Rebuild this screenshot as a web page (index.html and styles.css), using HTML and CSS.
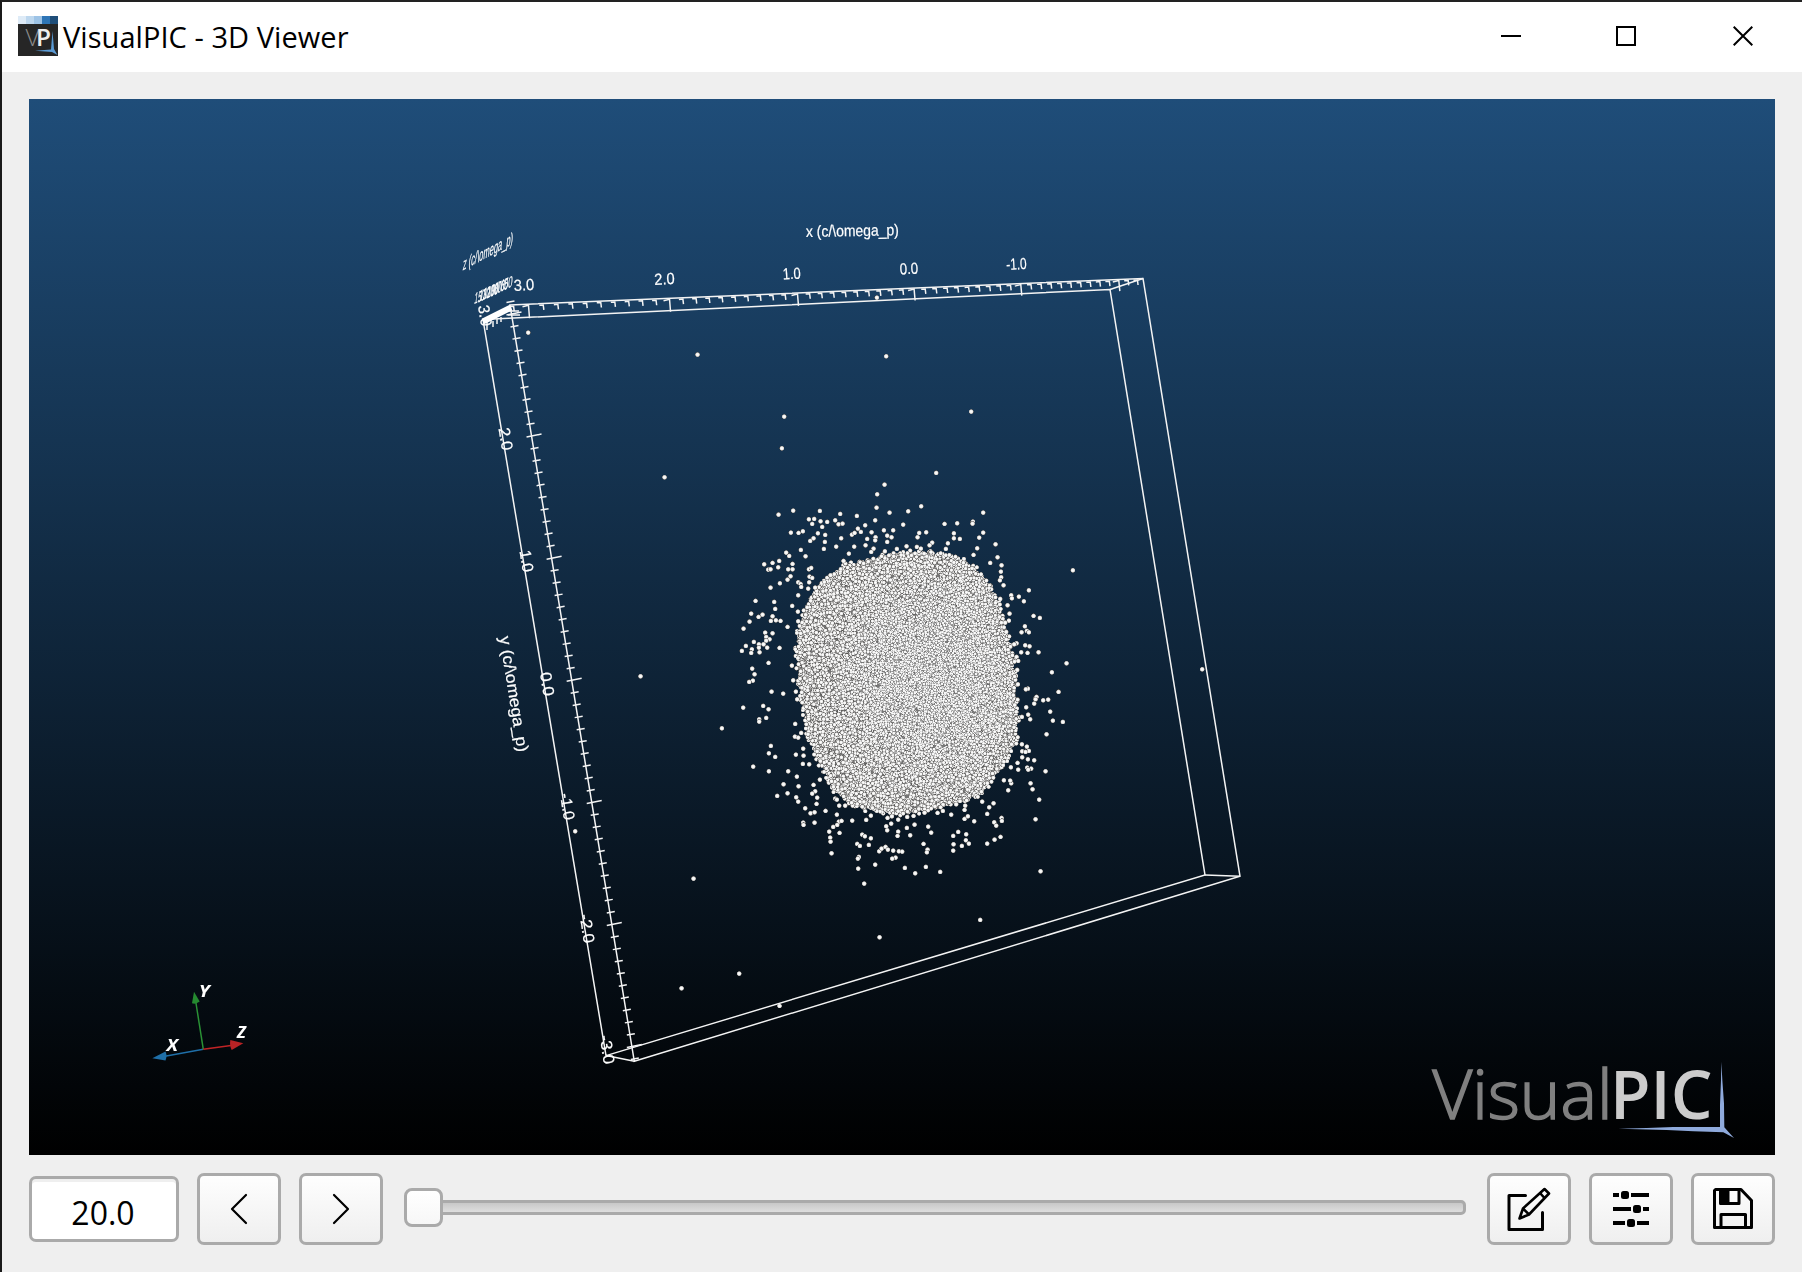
FILE: index.html
```html
<!DOCTYPE html>
<html lang="en">
<head>
<meta charset="utf-8">
<title>VisualPIC - 3D Viewer</title>
<link rel="stylesheet" href="styles.css">
</head>
<body>
<div class="window">
  <header class="titlebar">
    <svg class="app-icon" viewBox="0 0 40 40">
      <rect width="40" height="40" fill="#262626"/>
      <rect width="8" height="8" fill="#deebf7"/><rect x="8" width="8" height="8" fill="#bdd7ee"/>
      <rect x="16" width="8" height="8" fill="#9dc3e6"/><rect x="24" width="8" height="8" fill="#2e75b6"/>
      <rect x="32" width="8" height="8" fill="#1f4e79"/>
      <text x="7.500" y="30" class="icon-v" textLength="14" lengthAdjust="spacingAndGlyphs">V</text>
      <text x="18" y="30" class="icon-p" textLength="15" lengthAdjust="spacingAndGlyphs">P</text>
      <path d="M34.500 15 L36 33 L39.500 39 L34 36 L17 34.700 L33 33.500Z" fill="#5b9bd5"/>
    </svg>
    <h1 class="title">VisualPIC - 3D Viewer</h1>
    <div class="controls">
      <svg viewBox="0 0 20 20"><path d="M0 10H20" /></svg>
      <svg viewBox="0 0 20 20"><rect x="1" y="1" width="18" height="18"/></svg>
      <svg viewBox="0 0 20 20"><path d="M.7 .7 19.300 19.300M19.300 .7 .7 19.300"/></svg>
    </div>
  </header>
  <main class="content">
    <section class="viewport">
      <canvas id="cloud" class="layer" width="1746" height="1056"></canvas>
      <svg class="layer" viewBox="29 99 1746 1056">
        <g class="wire">
          <path d="M510 305 1143 278.500 1240 876.300 634.300 1061.300Z"/>
          <path d="M483 319.500 1110 289.500 1205 875 606 1055.600Z"/>
          <path d="M1110 289.500 1143 278.500M1205 875 1240 876.300M606 1055.600 634.300 1061.300"/>
          <path id="ticks"/>
          <path d="M493 321v6M497 319v5M501 317v5M505 311h14M508 315h12M487 322v8"/>
        </g>
        <path d="M483 321.500 511 307.500" stroke="#fff" stroke-width="6"/>
        <g class="axis-text">
          <text transform="translate(806 237) rotate(-1)" textLength="93" lengthAdjust="spacingAndGlyphs">x (c/\omega_p)</text>
          <text transform="translate(514 291) rotate(-3)" textLength="20.500" lengthAdjust="spacingAndGlyphs">3.0</text>
          <text transform="translate(654.500 285) rotate(-3)" textLength="20.500" lengthAdjust="spacingAndGlyphs">2.0</text>
          <text transform="translate(783 279.500) rotate(-3)" textLength="18" lengthAdjust="spacingAndGlyphs">1.0</text>
          <text transform="translate(900 274.500) rotate(-3)" textLength="18.500" lengthAdjust="spacingAndGlyphs">0.0</text>
          <text transform="translate(1006.500 270) rotate(-3)" textLength="20.500" lengthAdjust="spacingAndGlyphs">-1.0</text>

          <text transform="translate(478 306) rotate(81)" textLength="21" lengthAdjust="spacingAndGlyphs">3.0</text>
          <text transform="translate(498.500 428.500) rotate(81)" textLength="23" lengthAdjust="spacingAndGlyphs">2.0</text>
          <text transform="translate(519.500 551) rotate(81)" textLength="22" lengthAdjust="spacingAndGlyphs">1.0</text>
          <text transform="translate(540 673) rotate(81)" textLength="24" lengthAdjust="spacingAndGlyphs">0.0</text>
          <text transform="translate(560 794) rotate(81)" textLength="27" lengthAdjust="spacingAndGlyphs">-1.0</text>
          <text transform="translate(579.500 915) rotate(81)" textLength="29" lengthAdjust="spacingAndGlyphs">-2.0</text>
          <text transform="translate(599.500 1036) rotate(81)" textLength="29" lengthAdjust="spacingAndGlyphs">-3.0</text>
          <text transform="translate(499.500 637) rotate(81)" textLength="117" lengthAdjust="spacingAndGlyphs">y (c/\omega_p)</text>

          <text transform="matrix(.47 -.25 -.1 1.080 462.500 270.500)">z (c/\omega_p)</text>
          <g class="z-numbers">
            <text transform="matrix(.38 -.15 -.12 1 474 304)">150</text>
            <text transform="matrix(.38 -.15 -.12 1 479 301.500)">130</text>
            <text transform="matrix(.38 -.15 -.12 1 483 299.500)">120</text>
            <text transform="matrix(.38 -.15 -.12 1 487 298)">100</text>
            <text transform="matrix(.38 -.15 -.12 1 491 296)">90</text>
            <text transform="matrix(.38 -.15 -.12 1 494 294.500)">80</text>
            <text transform="matrix(.38 -.15 -.12 1 497 293)">70</text>
            <text transform="matrix(.38 -.15 -.12 1 500.500 291.500)">60</text>
            <text transform="matrix(.48 -.19 -.1 1 503.500 290)">50</text>
          </g>
        </g>
        <g class="triad">
          <path d="M203.300 1049.300 165 1056.300" stroke="#1f6fa8"/>
          <path d="M152.300 1058.300 165.500 1051.500Q167.500 1056 165.500 1060.500Z" fill="#1f6fa8"/>
          <path d="M203.300 1049.300 195.800 1002" stroke="#2a9235"/>
          <path d="M194 991.700 199.700 1001.500Q196 1004.500 192 1003.300Z" fill="#258a30"/>
          <path d="M203.300 1049.300 231 1045.500" stroke="#c02426"/>
          <path d="M243.300 1043.300 230.300 1040Q229.500 1046 231.700 1050Z" fill="#b82325"/>
          <text x="166.500" y="1050.500" textLength="11.500" lengthAdjust="spacingAndGlyphs">X</text>
          <text x="198.800" y="997" textLength="11" lengthAdjust="spacingAndGlyphs">Y</text>
          <text x="237" y="1038.300">Z</text>
        </g>
        <g class="watermark">
          <text class="wm-light" x="1432.500" y="1118.600" textLength="180" lengthAdjust="spacingAndGlyphs">Visual</text>
          <text class="wm-bold" x="1610" y="1118.600" textLength="102.500" lengthAdjust="spacingAndGlyphs">PIC</text>
          <path transform="translate(1400 1040) scale(.33333)" fill="#8faadc" d="M964 65 967 120 972 190 973 262 985 275 1002 294 970 277 880 274 800 270 655 266 740 264 820 261 960 261 960 195 963 120Z"/>
        </g>
      </svg>
    </section>
    <footer class="toolbar">
      <div class="time-box">20.0</div>
      <button class="btn"><svg viewBox="0 0 84 72"><path d="M49 22 35 36 49 50" fill="none" stroke="#000" stroke-width="2.200" stroke-linecap="round" stroke-linejoin="round"/></svg></button>
      <button class="btn"><svg viewBox="0 0 84 72"><path d="M35 22 49 36 35 50" fill="none" stroke="#000" stroke-width="2.200" stroke-linecap="round" stroke-linejoin="round"/></svg></button>
      <div class="slider"><div class="groove"></div><div class="handle"></div></div>
      <button class="btn"><svg viewBox="0 0 84 72">
        <g fill="none" stroke="#000" stroke-width="3" stroke-linejoin="round" stroke-linecap="round">
          <path d="M38.500 22.500H22V56.500H55.500V39.500"/>
          <path stroke-width="2.600" d="M32.500 45.500 36 35.500 57.500 16 62 20.500 42 41.500ZM36 35.500 42 41.500M53 20 57.500 25"/>
        </g></svg></button>
      <button class="btn"><svg viewBox="0 0 84 72">
        <path d="M24 22h6M42 22h18M24 36h18M54 36h6M24 50h12M48 50h12" stroke="#000" stroke-width="4"/>
        <rect x="32" y="18" width="8" height="8" rx="2.500"/><rect x="44" y="32" width="8" height="8" rx="2.500"/><rect x="38" y="46" width="8" height="8" rx="2.500"/>
      </svg></button>
      <button class="btn"><svg viewBox="0 0 84 72">
        <g fill="none" stroke="#000" stroke-width="3" stroke-linejoin="round">
          <path d="M24.500 16.500H50L60.500 27.500V54.500H23.500V17.500Z"/>
          <path d="M29.500 17V30.500H48V17M30 54V41.500H54.500V54"/>
        </g>
        <path d="M29 17h9.500v13H29z"/>
      </svg></button>
    </footer>
  </main>
</div>
<script src="scene.js"></script>
</body>
</html>
```
FILE: styles.css
```css
* { box-sizing: border-box; }

body {
  margin: 0;
  width: 1802px;
  height: 1272px;
  overflow: hidden;
  background: #efefef;
  font-family: "Open Sans", "Noto Sans", sans-serif;
}

.window {
  display: flex;
  flex-direction: column;
  height: 100%;
  border-top: 2px solid #222;
  border-left: 2px solid #1a1a1a;
}

.titlebar {
  display: flex;
  align-items: center;
  height: 70px;
  padding: 0 49px 0 16px;
  background: #fff;
}

.app-icon { width: 40px; height: 40px; margin-top: -2px; }
.icon-v { font-size: 24px; font-weight: 300; fill: #8a8a8a; }
.icon-p { font-size: 24px; font-weight: 600; fill: #eee; }

.title {
  margin: -1px 0 0 5px;
  font-size: 29px;
  font-weight: 400;
  letter-spacing: .05px;
  white-space: nowrap;
}

.controls {
  display: flex;
  gap: 96px;
  margin: -2px 0 0 auto;
}

.controls svg {
  width: 20px;
  height: 20px;
  fill: none;
  stroke: #000;
  stroke-width: 2;
}

.controls svg:nth-child(2) { margin: 0 1px 0 -1px; }

.content {
  display: flex;
  flex-direction: column;
  flex: 1;
  padding: 27px;
  gap: 18px;
}

.viewport {
  position: relative;
  height: 1056px;
  background: linear-gradient(#1f4d79, #000);
}

.layer {
  position: absolute;
  inset: 0;
  width: 1746px;
  height: 1056px;
}

.wire path { fill: none; stroke: #f4f4f4; stroke-width: 1.5; }

.axis-text {
  font-family: "Liberation Sans", Arial, sans-serif;
  font-size: 16px;
  fill: #fff;
  stroke: #fff;
  stroke-width: .2px;
}

.triad path { stroke-width: 1.5; }

.triad text {
  font: italic 700 16.500px "Noto Sans", sans-serif;
  fill: #fff;
}

.watermark text { font-size: 67.500px; }
.wm-light { font-weight: 300; fill: #808080; stroke: #808080; stroke-width: 1.6px; }
.wm-bold { font-weight: 600; fill: #ccc; }

.toolbar {
  display: flex;
  align-items: center;
  gap: 18px;
  height: 72px;
}

.time-box {
  width: 150px;
  height: 66px;
  padding-right: 2px;
  border: 3px solid #aaa;
  border-radius: 7px;
  background: #fff;
  box-shadow: inset 0 3px #efefef;
  font-size: 32px;
  line-height: 67px;
  text-align: center;
}

.btn {
  width: 84px;
  height: 72px;
  padding: 0;
  border: 3px solid #aaa;
  border-radius: 7px;
  background: linear-gradient(#fefefe, #efefef);
}

.btn svg { display: block; width: 84px; height: 72px; margin: -3px; }

.slider {
  position: relative;
  display: flex;
  align-items: center;
  flex: 1;
  height: 39px;
  margin-bottom: 3px;
  padding: 0 3px;
}

.groove {
  flex: 1;
  height: 15px;
  border: 3px solid #aaa;
  border-radius: 5px;
  background: linear-gradient(#c8c8c8, #dedede);
}

.handle {
  position: absolute;
  left: 3px;
  width: 39px;
  height: 39px;
  border: 3px solid #aaa;
  border-radius: 8px;
  background: linear-gradient(#fff, #f7f7f7);
}
```
FILE: scene.js
```js
// Axis ticks, in window coordinates.
const ticks = [];
for (let i = -1; i <= 52; i++) {
  const t = i / 10;
  const x = (528.5 + 175.3 * t) / (1 + 0.05116 * t);
  const y = 305 - (x - 511) * 0.04193;
  if (i % 10 === 0) ticks.push(`M${x - 6} ${y + 2.5}L${x} ${y + 1}l1 ${13 - (x - 528) * 0.004}`);
  else ticks.push(`M${x - 4} ${y + 1.6}L${x} ${y + 1.3}l.6 5`);
}
for (let i = -1; i <= 61; i++) {
  const y = 314 + i * 12.21;
  const x = 510 + (y - 305) * 0.1643;
  ticks.push(i % 10 === 0 ? `M${x - 5} ${y + 1}L${x + 10} ${y - 2}` : `M${x - 3} ${y + 0.7}L${x + 5} ${y - 0.7}`);
}
document.getElementById("ticks").setAttribute("d", ticks.join(""));

// Particles. Positions are stored in thirds of a pixel from each group's origin.
const groups = [
  { at: [440, 210], pts: [264,367,772,433,1032,619,1025,714] },
  { at: [780, 210], pts: [290,262,318,438,573,604] },
  { at: [540, 760], pts: [105,213,460,355,424,684,597,640,718,737] },
  { at: [0, 0], pts: [1993,1431,1921,2028,3606,2007,2940,2759,2638,2811] },
  { at: [720, 470], pts: [
    648,8,493,43,471,72,469,112,175,133,219,121,299,122,360,131,410,137,508,127,564,123,603,108,789,127,
    266,147,282,146,276,161,301,153,321,155,345,150,355,162,367,160,306,170,465,150,435,165,549,163,673,161,711,159,758,154,757,160,
    212,187,235,188,248,183,293,189,315,194,280,204,270,212,314,215,311,236,348,229,363,204,395,193,403,188,413,175,422,185,
    441,206,454,186,466,201,465,210,436,225,402,229,386,250,491,180,519,180,501,196,514,201,501,215,597,188,618,186,592,201,
    701,189,701,204,719,206,683,219,636,217,628,225,789,187,777,202,826,222,771,234,760,254,832,261,810,278,844,285,842,304,843,321,839,330,850,345,
    242,239,256,258,198,247,207,257,177,272,157,278,132,282,144,298,151,297,174,291,217,281,204,297,217,297,211,318,202,328,179,339,151,352,
    266,297,273,293,268,319,276,323,267,336,234,336,241,341,243,350,264,355,285,352,234,375,
    106,392,162,395,165,416,216,407,233,424,93,430,115,440,127,433,157,438,152,452,167,450,181,452,88,454,70,475,202,470,234,453,
    135,487,157,489,138,500,148,507,138,511,130,522,116,522,116,532,101,515,77,527,95,537,65,542,93,548,118,546,141,532,178,533,
    145,578,215,586,96,595,103,612,98,631,87,635,219,630,154,664,189,670,227,664,
    1058,300,926,360,896,379,911,393,873,375,875,384,862,405,868,430,940,437,959,443,914,468,904,486,920,482,926,486,866,451,855,457,
    915,525,928,528,889,519,882,522,903,546,922,548,955,546,889,560,894,572,1039,579,995,606,1015,665,917,657,923,656,947,682,891,599,893,642,
    460,235,453,245,494,243,559,228,530,236,590,230,602,235,677,236,370,272,331,315,840,386,858,485] },
  { at: [720, 680], pts: [
    5,144,69,82,129,77,145,87,117,117,117,124,138,113,231,57,225,131,243,158,224,169,234,172,152,197,146,219,165,230,99,259,146,273,204,273,
    249,205,227,223,250,226,248,251,267,252,230,289,299,298,190,312,235,318,280,314,285,333,276,340,171,347,202,339,228,351,234,364,291,352,289,371,
    255,384,271,399,283,396,316,392,350,403,249,427,250,434,283,427,357,376,375,376,345,355,350,358,356,424,364,422,351,434,339,440,327,454,358,458,
    330,472,331,484,334,519,396,421,438,419,452,406,426,463,434,468,452,474,411,491,419,497,446,494,416,530,413,535,414,565,432,610,465,553,
    477,513,484,505,496,500,503,508,519,511,536,513,546,514,526,532,516,535,498,438,501,450,513,430,502,413,534,418,515,408,534,454,532,467,
    560,443,570,465,583,433,561,410,580,407,624,439,633,457,610,491,622,508,620,516,617,560,585,579,554,563,660,575,
    693,403,733,416,743,408,733,389,762,423,714,455,699,467,738,462,737,480,746,490,725,497,700,492,699,511,786,364,807,381,820,369,801,401,
    822,426,828,436,844,413,845,422,841,470,823,478,801,490,961,573,946,417,957,358,937,327,931,309,864,330,873,309,870,301,851,300,
    976,273,942,240,923,237,906,231,906,213,926,212,920,199,905,192,916,215,892,248,894,268,872,261,933,265,921,262,924,268,
    979,162,1028,125,998,121,990,94,1015,35,984,58,969,60,949,50,946,57,942,70,918,81,924,103,930,117,923,25,917,27,905,110,735,376,708,372,652,398,668,392,613,397] }
];

// Silhouette of the dense core, same units, origin 720,470.
const hull = [[245,690],[236,600],[233,530],[240,470],[255,420],[280,375],[320,330],[370,289],[420,277],[480,262],[540,250],
  [600,248],[650,252],[715,265],[763,296],[808,347],[832,400],[850,460],[869,530],[880,600],[888,690],[893,730],[885,820],
  [855,870],[815,930],[770,977],[700,997],[640,1015],[560,1030],[470,1023],[400,1006],[344,958],[304,886],[270,810],[254,720]];

const canvas = document.getElementById("cloud");
const ctx = canvas.getContext("2d");
ctx.translate(-29, -99);

let seed = 20;
function random() {
  seed = (seed * 1664525 + 1013904223) >>> 0;
  return seed / 4294967296;
}

function makeSphere(mid, outer, edge) {
  const s = document.createElement("canvas");
  s.width = s.height = 16;
  const c = s.getContext("2d");
  const g = c.createRadialGradient(8, 8, 0, 8, 8, 8);
  g.addColorStop(0, "#fff");
  g.addColorStop(0.55, mid);
  g.addColorStop(0.8, outer);
  g.addColorStop(1, edge);
  c.fillStyle = g;
  c.beginPath();
  c.arc(8, 8, 8, 0, Math.PI * 2);
  c.fill();
  return s;
}
const rimSphere = makeSphere("#f4f4f3", "#bebdbc", "#3a3938");
const innerSphere = makeSphere("#f6f6f6", "#c0c0c0", "#5c5c5c");
function dot(x, y, r, sprite = rimSphere) { ctx.drawImage(sprite, x - r, y - r, r * 2, r * 2); }

const path = new Path2D();
hull.forEach(([x, y], i) => path[i ? "lineTo" : "moveTo"](720 + x / 3, 470 + y / 3));
path.closePath();
ctx.fillStyle = "#777";
ctx.fill(path);

// Spheres get gradually finer towards the middle of the core.
for (let n = 0; n < 26000;) {
  const x = 794 + random() * 228;
  const y = 546 + random() * 272;
  if (!ctx.isPointInPath(path, x - 29, y - 99)) continue;
  n++;
  const d = Math.hypot((x - 934) / 125, (y - 680) / 142);
  const rim = Math.min(1, Math.max(0, (d - 0.3) / 0.65));
  if (random() < rim * 0.5) continue;
  dot(x, y, 1.6 + rim * 0.65, random() < rim ? rimSphere : innerSphere);
}

// Loose rim, so that the silhouette is made of single spheres.
hull.forEach(([x0, y0], i) => {
  const [x1, y1] = hull[(i + 1) % hull.length];
  const count = Math.hypot(x1 - x0, y1 - y0) / 7;
  for (let k = 0; k < count; k++) {
    const f = random();
    const x = 720 + (x0 + (x1 - x0) * f) / 3 + (random() - 0.5) * 5;
    const y = 470 + (y0 + (y1 - y0) * f) / 3 + (random() - 0.5) * 5;
    dot(x, y, 2.3);
  }
});

for (const { at, pts } of groups)
  for (let i = 0; i < pts.length; i += 2) dot(at[0] + 0.2 + pts[i] / 3, at[1] + 0.3 + pts[i + 1] / 3, 2.5);
```
